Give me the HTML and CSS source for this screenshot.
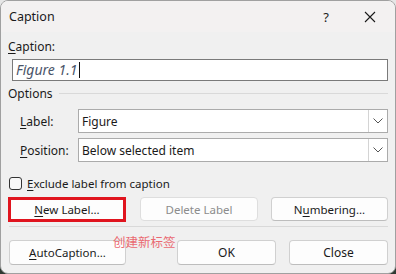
FILE: index.html
```html
<!DOCTYPE html>
<html>
<head>
	<title>Caption</title>
	<meta charset="utf-8" />
	<link rel="stylesheet" href="styles.css">
</head>
<body>
	<div class="dialog">
		<div class="titlebar">
			<span class="title">Caption</span>
			<span class="help">?</span>
			<span class="close">
				<svg width="12" height="12" viewBox="0 0 12 12"><path d="M1 1 L11 11 M11 1 L1 11" stroke="#1a1a1a" stroke-width="1.1" fill="none"/></svg>
			</span>
		</div>

		<div class="content">
			<div class="field-label"><u>C</u>aption:</div>
			<div class="caption-input">Figure 1.1<span class="caret"></span></div>

			<div class="group-title"><span>Options</span><div class="line"></div></div>

			<div class="row">
				<label><u>L</u>abel:</label>
				<div class="combo"><span class="value">Figure</span><span class="drop"><svg width="10" height="6" viewBox="0 0 10 6"><path d="M0.5 0.5 L5 5 L9.5 0.5" stroke="#555" stroke-width="1" fill="none"/></svg></span></div>
			</div>
			<div class="row">
				<label><u>P</u>osition:</label>
				<div class="combo"><span class="value">Below selected item</span><span class="drop"><svg width="10" height="6" viewBox="0 0 10 6"><path d="M0.5 0.5 L5 5 L9.5 0.5" stroke="#555" stroke-width="1" fill="none"/></svg></span></div>
			</div>

			<div class="check"><span class="box"></span><span><u>E</u>xclude label from caption</span></div>

			<div class="buttons first">
				<button class="btn new"><u>N</u>ew Label...</button>
				<button class="btn del" disabled>Delete Label</button>
				<button class="btn num">N<u>u</u>mbering...</button>
			</div>

			<div class="sep"></div>

			<div class="buttons second">
				<button class="btn auto"><u>A</u>utoCaption...</button>
				<button class="btn ok">OK</button>
				<button class="btn closebtn">Close</button>
			</div>

			<span class="note">创建新标签</span>
		</div>
	</div>
</body>
</html>
```

FILE: styles.css
```css
html, body {
	margin: 0;
	padding: 0;
}

body {
	width: 396px;
	height: 274px;
	overflow: hidden;
	background: linear-gradient(#e6e6e6 0, #e6e6e6 50%, #2f3a33 50%);
	font-family: "Noto Sans", "Open Sans", sans-serif;
	font-size: 11.5px;
	color: #1a1a1a;
}

u {
	text-decoration-thickness: 1px;
	text-underline-offset: 2px;
}

.dialog {
	width: 396px;
	height: 274px;
	background: #f0f0f0;
	border-radius: 8px;
	overflow: hidden;
	box-sizing: border-box;
	border: 1px solid #a0a0a0;
}

.titlebar {
	height: 31px;
	background: #f3f1f1;
	display: flex;
	align-items: center;
	font-size: 12.5px;
}

.title {
	margin-left: 8px;
	margin-top: -1px;
	flex: 1;
}

.help {
	width: 20px;
	text-align: center;
	margin-right: 28px;
	font-size: 13px;
}

.close {
	width: 12px;
	height: 12px;
	margin-right: 19px;
	display: flex;
}

.content {
	position: relative;
	padding: 7px 7px 0 7px;
}

.field-label {
	height: 16px;
	line-height: 16px;
	font-size: 12px;
}

.caption-input {
	margin: 4px 0 0 4px;
	height: 22px;
	box-sizing: border-box;
	border: 1px solid #7a7a7a;
	background: #fff;
	font-style: italic;
	font-size: 14px;
	color: #4a5468;
	line-height: 20px;
	padding-left: 3px;
	display: flex;
	align-items: center;
}

.caret {
	width: 1px;
	height: 16px;
	background: #111;
	margin-left: 2px;
}

.group-title {
	display: flex;
	align-items: center;
	height: 16px;
	margin-top: 4px;
	font-size: 12px;
}

.group-title .line {
	flex: 1;
	height: 1px;
	background: #d9d9d9;
	margin-left: 6px;
}

.row {
	display: flex;
	align-items: center;
	margin-top: 8px;
	font-size: 12px;
}

.row + .row {
	margin-top: 5px;
}

.row label {
	width: 70px;
	flex-shrink: 0;
	padding-left: 12px;
	box-sizing: border-box;
	font-size: 12px;
	white-space: nowrap;
}

.combo {
	flex: 1;
	height: 24px;
	box-sizing: border-box;
	border: 1px solid #ababab;
	background: #fff;
	display: flex;
	align-items: center;
	padding-left: 3px;
}

.combo .value {
	flex: 1;
}

.combo .drop {
	width: 19px;
	height: 22px;
	box-sizing: border-box;
	border-left: 1px solid #d4d4d4;
	display: flex;
	align-items: center;
	justify-content: center;
}

.check {
	display: flex;
	align-items: center;
	margin-top: 13px;
	height: 16px;
}

.check .box {
	width: 13px;
	height: 13px;
	box-sizing: border-box;
	border: 1px solid #333;
	border-radius: 3px;
	background: #f8f8f8;
	margin: 0 5px 0 1px;
}

.buttons {
	display: flex;
	margin-top: 6px;
}

.btn {
	height: 24px;
	box-sizing: border-box;
	background: #fdfdfd;
	border: 1px solid #d0d0d0;
	border-bottom-color: #bdbdbd;
	border-radius: 4px;
	font-family: "Noto Sans", "Open Sans", sans-serif;
	font-size: 11.5px;
	color: #1a1a1a;
	padding: 0;
}

.btn.new {
	width: 118px;
	height: 25px;
	border: 3px solid #e0141e;
	border-radius: 0;
}

.btn.del {
	width: 118px;
	margin-left: 14px;
	color: #8c8c8c;
	border-color: #dedede;
}

.btn.num {
	width: 117px;
	margin-left: 13px;
}

.sep {
	height: 1px;
	background: #d9d9d9;
	margin: 4px 0 0 1px;
}

.buttons.second {
	margin-top: 13px;
}

.buttons.second .btn {
	height: 25px;
}

.btn.auto {
	width: 117px;
	margin-left: 1px;
}

.btn.ok {
	width: 99px;
	margin-left: 51px;
	font-size: 12px;
}

.btn.closebtn {
	width: 99px;
	margin-left: 13px;
	font-size: 12px;
}

.note {
	position: absolute;
	left: 112px;
	top: 200px;
	font-family: "Noto Sans CJK SC", sans-serif;
	font-size: 12.5px;
	color: #ea5a64;
	opacity: 0.9;
}
```
